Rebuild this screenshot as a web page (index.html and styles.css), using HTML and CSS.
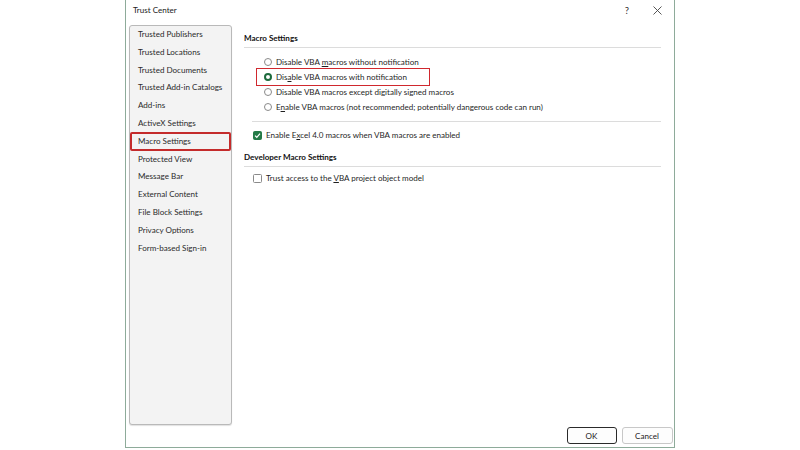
FILE: index.html
```html
<!DOCTYPE html>
<html>
<head>
<meta charset="utf-8">
<link rel="stylesheet" href="styles.css">
</head>
<body>
<div class="dialog">
  <div class="titlebar">
    <span class="title">Trust Center</span>
    <span class="help">?</span>
    <span class="close">
      <svg width="9" height="9" viewBox="0 0 9 9"><path d="M0.5 0.5L8.5 8.5M8.5 0.5L0.5 8.5" stroke="#444" stroke-width="0.9" fill="none"/></svg>
    </span>
  </div>
  <div class="main">
    <div class="sidebar">
      <div class="nav-item">Trusted Publishers</div>
      <div class="nav-item">Trusted Locations</div>
      <div class="nav-item">Trusted Documents</div>
      <div class="nav-item">Trusted Add-in Catalogs</div>
      <div class="nav-item">Add-ins</div>
      <div class="nav-item">ActiveX Settings</div>
      <div class="nav-item selected">Macro Settings</div>
      <div class="nav-item">Protected View</div>
      <div class="nav-item">Message Bar</div>
      <div class="nav-item">External Content</div>
      <div class="nav-item">File Block Settings</div>
      <div class="nav-item">Privacy Options</div>
      <div class="nav-item">Form-based Sign-in</div>
    </div>
    <div class="content">
      <div class="section-head">Macro Settings</div>
      <div class="options">
        <div class="option"><span class="radio"></span><span>Disable VBA <u>m</u>acros without notification</span></div>
        <div class="option highlighted"><span class="radio checked"></span><span>Dis<u>a</u>ble VBA macros with notification</span></div>
        <div class="option"><span class="radio"></span><span>Disable VBA macros except digitally signed macros</span></div>
        <div class="option"><span class="radio"></span><span>E<u>n</u>able VBA macros (not recommended; potentially dangerous code can run)</span></div>
      </div>
      <div class="divider"></div>
      <div class="check-row"><span class="checkbox checked"><svg width="7" height="7" viewBox="0 0 7 7"><path d="M1 3.6L2.8 5.3L6 1.6" stroke="#fff" stroke-width="1.2" fill="none"/></svg></span><span>Enable E<u>x</u>cel 4.0 macros when VBA macros are enabled</span></div>
      <div class="section-head dev">Developer Macro Settings</div>
      <div class="check-row second"><span class="checkbox"></span><span>Trust access to the <u>V</u>BA project object model</span></div>
    </div>
  </div>
  <div class="footer">
    <button class="btn primary">OK</button>
    <button class="btn">Cancel</button>
  </div>
</div>
</body>
</html>
```
FILE: styles.css
```css
html, body {
  margin: 0;
  padding: 0;
  background: #ffffff;
}
body {
  font-family: Lato, "Noto Sans", "DejaVu Sans", sans-serif;
  font-size: 8.05px;
  color: #1f1f1f;
}
.dialog {
  margin-left: 125px;
  width: 550px;
  height: 448px;
  box-sizing: border-box;
  border: 1.5px solid #8eab9a;
  border-top: none;
  display: flex;
  flex-direction: column;
  background: #fff;
}
.titlebar {
  height: 25px;
  display: flex;
  align-items: center;
  padding-left: 7px;
  padding-bottom: 5px;
  box-sizing: border-box;
}
.title {
  flex: 1;
  color: #222;
}
.help {
  width: 10px;
  text-align: center;
  margin-right: 21px;
  color: #333;
  font-size: 9.5px;
}
.close {
  width: 9px;
  margin-right: 12px;
  display: flex;
}
.main {
  display: flex;
  padding-left: 3px;
  height: 400px;
}
.sidebar {
  width: 103px;
  height: 400px;
  box-sizing: border-box;
  background: #f3f3f3;
  border: 1px solid #b9b9b9;
  border-radius: 3px;
  box-shadow: 0 1px 1px rgba(0,0,0,0.12);
}
.nav-item {
  height: 17.8px;
  line-height: 17.8px;
  padding-left: 8px;
  color: #2b2b2b;
  position: relative;
  white-space: nowrap;
}
.nav-item.selected::after {
  content: "";
  position: absolute;
  left: 0;
  right: 0;
  top: -0.5px;
  bottom: -0.5px;
  border: 2px solid #c42b2b;
  border-radius: 2px;
}
.content {
  margin-left: 12px;
  width: 417px;
}
.section-head {
  font-weight: bold;
  color: #111;
  margin-top: 6px;
  line-height: 14px;
  padding-bottom: 2px;
  border-bottom: 1px solid #dcdcdc;
}
.options {
  padding-top: 6px;
  margin-left: 16px;
}
.option {
  height: 15px;
  display: flex;
  align-items: center;
  position: relative;
  white-space: nowrap;
}
.option.highlighted::after {
  content: "";
  position: absolute;
  left: -4px;
  top: -1.5px;
  width: 174px;
  height: 18px;
  box-sizing: border-box;
  border: 1.5px solid #d0282e;
}
.radio {
  width: 8px;
  height: 8px;
  box-sizing: border-box;
  border: 1px solid #8a8a8a;
  border-radius: 50%;
  margin-left: 4px;
  margin-right: 4px;
  background: #fff;
  flex: none;
}
.radio.checked {
  border: 2.5px solid #1d6b3d;
}
.divider {
  margin-top: 7px;
  margin-left: 8px;
  border-top: 1px solid #dcdcdc;
}
.check-row {
  margin-top: 6px;
  margin-left: 9px;
  height: 14px;
  display: flex;
  align-items: center;
  white-space: nowrap;
}
.checkbox {
  width: 9px;
  height: 9px;
  box-sizing: border-box;
  border: 1px solid #8a8a8a;
  border-radius: 1.5px;
  margin-right: 4px;
  display: flex;
  align-items: center;
  justify-content: center;
  flex: none;
  background: #fff;
}
.checkbox.checked {
  background: #237a47;
  border-color: #237a47;
}
.section-head.dev {
  margin-top: 8px;
}
.check-row.second {
  margin-top: 4px;
}
.footer {
  display: flex;
  justify-content: flex-end;
  gap: 5px;
  padding-top: 2px;
  padding-right: 1.5px;
}
.btn {
  font-family: inherit;
  font-size: 8.05px;
  color: #222;
  height: 17px;
  width: 51px;
  padding: 0;
  background: #fdfdfd;
  border: 1px solid #c8c8c8;
  border-radius: 3px;
}
.btn.primary {
  width: 50px;
  border: 1.5px solid #2a2a2a;
}
```
